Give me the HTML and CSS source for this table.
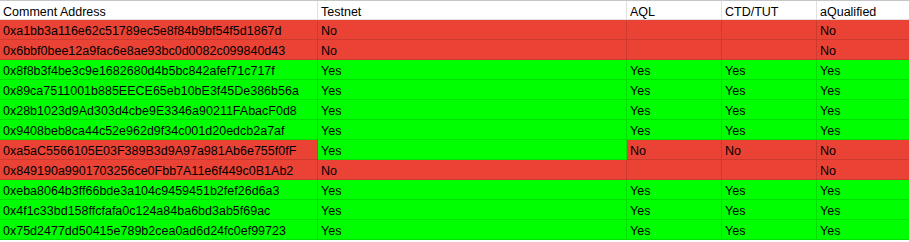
FILE: index.html
```html
<!DOCTYPE html>
<html>
<head>
<meta charset="utf-8">
<link rel="stylesheet" href="styles.css">
</head>
<body>
<div class="sheet">
  <div class="row head">
    <div class="c c1">Comment Address</div><div class="c c2">Testnet</div><div class="c c3">AQL</div><div class="c c4">CTD/TUT</div><div class="c c5">aQualified</div>
  </div>
  <div class="row red">
    <div class="c c1">0xa1bb3a116e62c51789ec5e8f84b9bf54f5d1867d</div><div class="c c2">No</div><div class="c c3"></div><div class="c c4"></div><div class="c c5">No</div>
  </div>
  <div class="row red">
    <div class="c c1">0x6bbf0bee12a9fac6e8ae93bc0d0082c099840d43</div><div class="c c2">No</div><div class="c c3"></div><div class="c c4"></div><div class="c c5">No</div>
  </div>
  <div class="row green">
    <div class="c c1">0x8f8b3f4be3c9e1682680d4b5bc842afef71c717f</div><div class="c c2">Yes</div><div class="c c3">Yes</div><div class="c c4">Yes</div><div class="c c5">Yes</div>
  </div>
  <div class="row green">
    <div class="c c1">0x89ca7511001b885EECE65eb10bE3f45De386b56a</div><div class="c c2">Yes</div><div class="c c3">Yes</div><div class="c c4">Yes</div><div class="c c5">Yes</div>
  </div>
  <div class="row green">
    <div class="c c1">0x28b1023d9Ad303d4cbe9E3346a90211FAbacF0d8</div><div class="c c2">Yes</div><div class="c c3">Yes</div><div class="c c4">Yes</div><div class="c c5">Yes</div>
  </div>
  <div class="row green">
    <div class="c c1">0x9408beb8ca44c52e962d9f34c001d20edcb2a7af</div><div class="c c2">Yes</div><div class="c c3">Yes</div><div class="c c4">Yes</div><div class="c c5">Yes</div>
  </div>
  <div class="row red">
    <div class="c c1">0xa5aC5566105E03F389B3d9A97a981Ab6e755f0fF</div><div class="c c2 gcell">Yes</div><div class="c c3">No</div><div class="c c4">No</div><div class="c c5">No</div>
  </div>
  <div class="row red">
    <div class="c c1">0x849190a9901703256ce0Fbb7A11e6f449c0B1Ab2</div><div class="c c2">No</div><div class="c c3"></div><div class="c c4"></div><div class="c c5">No</div>
  </div>
  <div class="row green">
    <div class="c c1">0xeba8064b3ff66bde3a104c9459451b2fef26d6a3</div><div class="c c2">Yes</div><div class="c c3">Yes</div><div class="c c4">Yes</div><div class="c c5">Yes</div>
  </div>
  <div class="row green">
    <div class="c c1">0x4f1c33bd158ffcfafa0c124a84ba6bd3ab5f69ac</div><div class="c c2">Yes</div><div class="c c3">Yes</div><div class="c c4">Yes</div><div class="c c5">Yes</div>
  </div>
  <div class="row green">
    <div class="c c1">0x75d2477dd50415e789b2cea0ad6d24fc0ef99723</div><div class="c c2">Yes</div><div class="c c3">Yes</div><div class="c c4">Yes</div><div class="c c5">Yes</div>
  </div>
</div>
</body>
</html>
```

FILE: styles.css
```css
html, body {
  margin: 0;
  padding: 0;
  background: #ffffff;
}
.sheet {
  width: 909px;
  border-top: 1px solid #c6c6c6;
  font-family: "Liberation Sans", Arial, sans-serif;
  font-size: 12.5px;
  color: #000000;
}
.row {
  display: flex;
  height: 20px;
}
.row.head {
  height: 19px;
}
.c {
  box-sizing: border-box;
  height: 20px;
  border-right: 1px solid rgba(0, 0, 0, 0.12);
  border-bottom: 1px solid rgba(0, 0, 0, 0.12);
  padding: 3px 3px 0 3px;
  line-height: 16px;
  white-space: nowrap;
  overflow: hidden;
}
.head .c {
  height: 19px;
  background: #ffffff;
}
.c1 { width: 318px; }
.c2 { width: 309px; }
.c3 { width: 95px; }
.c4 { width: 95px; }
.c5 { flex: 1; border-right: none; }
.red .c { background: #ea4335; }
.green .c { background: #00ff00; }
.red .c.gcell { background: #00ff00; }
```
